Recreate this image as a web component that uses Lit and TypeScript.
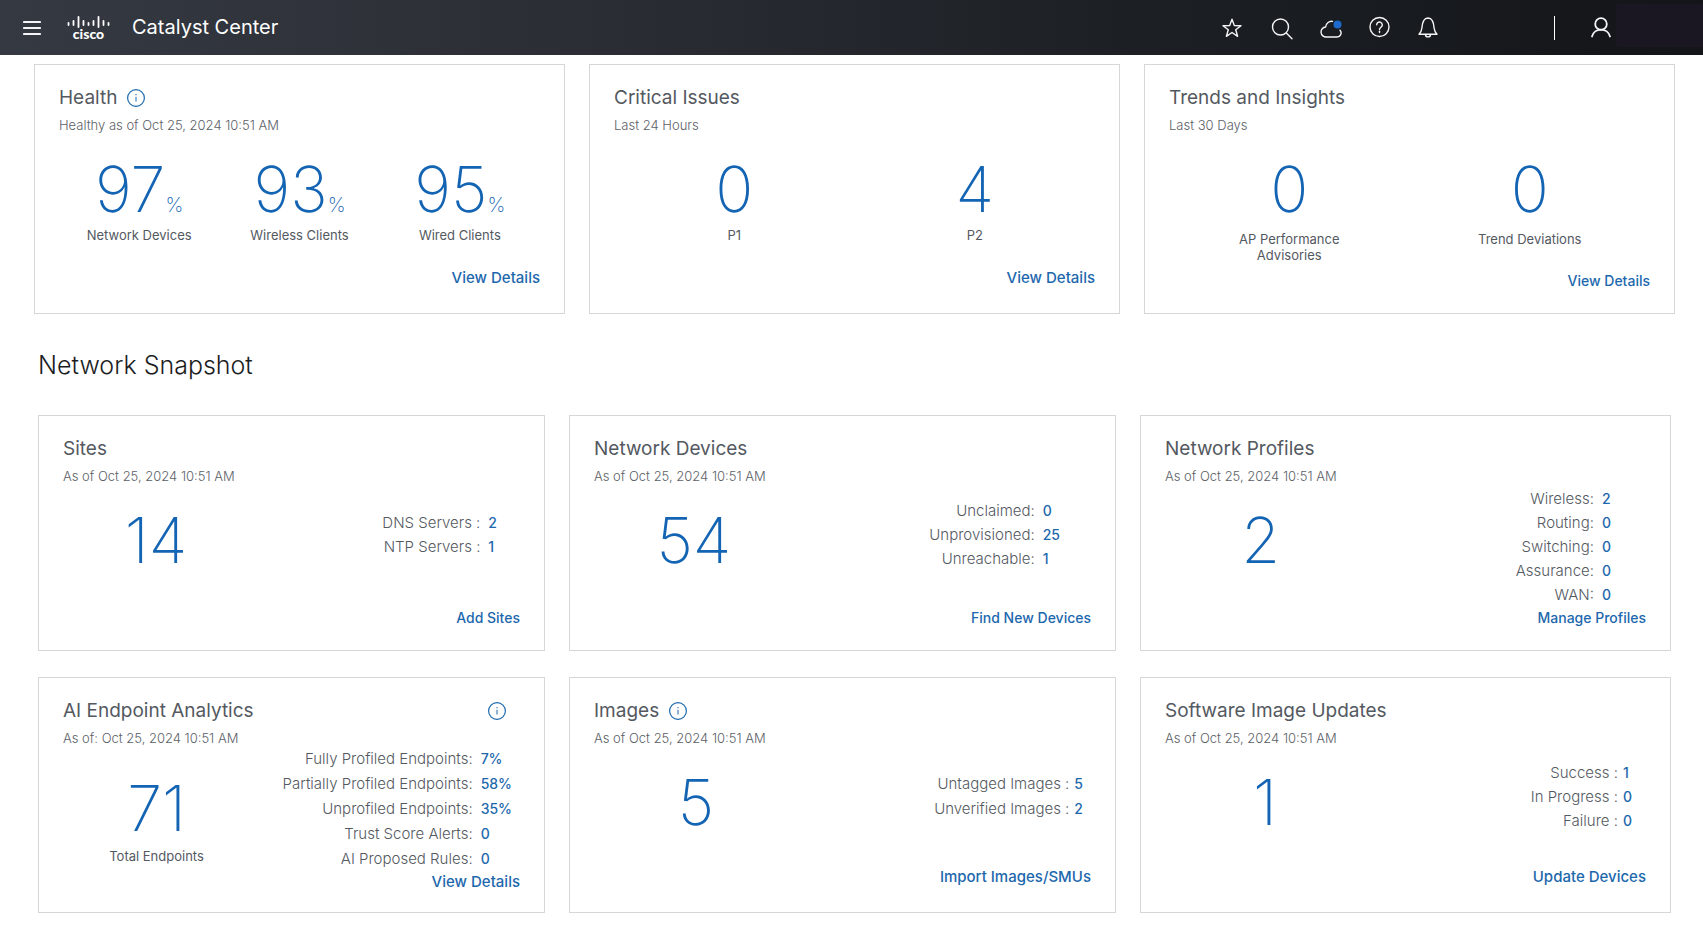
import { LitElement, html, css, svg, nothing } from "lit";
import { customElement, property } from "lit/decorators.js";

interface Metric {
  value: string;
  label?: string;
  unit?: string;
}

interface Stat {
  label: string;
  value: string;
}

interface CardData {
  id: string;
  title: string;
  subtitle: string;
  metrics: Metric[];
  stats?: Stat[];
  action: string;
  info?: boolean;
}

const overview: CardData[] = [
  {
    id: "health",
    title: "Health",
    subtitle: "Healthy as of Oct 25, 2024 10:51 AM",
    info: true,
    metrics: [
      { value: "97", unit: "%", label: "Network Devices" },
      { value: "93", unit: "%", label: "Wireless Clients" },
      { value: "95", unit: "%", label: "Wired Clients" },
    ],
    action: "View Details",
  },
  {
    id: "issues",
    title: "Critical Issues",
    subtitle: "Last 24 Hours",
    metrics: [
      { value: "0", label: "P1" },
      { value: "4", label: "P2" },
    ],
    action: "View Details",
  },
  {
    id: "trends",
    title: "Trends and Insights",
    subtitle: "Last 30 Days",
    metrics: [
      { value: "0", label: "AP Performance Advisories" },
      { value: "0", label: "Trend Deviations" },
    ],
    action: "View Details",
  },
];

const snapshot: CardData[] = [
  {
    id: "sites",
    title: "Sites",
    subtitle: "As of Oct 25, 2024 10:51 AM",
    metrics: [{ value: "14" }],
    stats: [
      { label: "DNS Servers :", value: "2" },
      { label: "NTP Servers :", value: "1" },
    ],
    action: "Add Sites",
  },
  {
    id: "devices",
    title: "Network Devices",
    subtitle: "As of Oct 25, 2024 10:51 AM",
    metrics: [{ value: "54" }],
    stats: [
      { label: "Unclaimed:", value: "0" },
      { label: "Unprovisioned:", value: "25" },
      { label: "Unreachable:", value: "1" },
    ],
    action: "Find New Devices",
  },
  {
    id: "profiles",
    title: "Network Profiles",
    subtitle: "As of Oct 25, 2024 10:51 AM",
    metrics: [{ value: "2" }],
    stats: [
      { label: "Wireless:", value: "2" },
      { label: "Routing:", value: "0" },
      { label: "Switching:", value: "0" },
      { label: "Assurance:", value: "0" },
      { label: "WAN:", value: "0" },
    ],
    action: "Manage Profiles",
  },
  {
    id: "endpoints",
    title: "AI Endpoint Analytics",
    subtitle: "As of: Oct 25, 2024 10:51 AM",
    info: true,
    metrics: [{ value: "71", label: "Total Endpoints" }],
    stats: [
      { label: "Fully Profiled Endpoints:", value: "7%" },
      { label: "Partially Profiled Endpoints:", value: "58%" },
      { label: "Unprofiled Endpoints:", value: "35%" },
      { label: "Trust Score Alerts:", value: "0" },
      { label: "AI Proposed Rules:", value: "0" },
    ],
    action: "View Details",
  },
  {
    id: "images",
    title: "Images",
    subtitle: "As of Oct 25, 2024 10:51 AM",
    info: true,
    metrics: [{ value: "5" }],
    stats: [
      { label: "Untagged Images :", value: "5" },
      { label: "Unverified Images :", value: "2" },
    ],
    action: "Import Images/SMUs",
  },
  {
    id: "updates",
    title: "Software Image Updates",
    subtitle: "As of Oct 25, 2024 10:51 AM",
    metrics: [{ value: "1" }],
    stats: [
      { label: "Success :", value: "1" },
      { label: "In Progress :", value: "0" },
      { label: "Failure :", value: "0" },
    ],
    action: "Update Devices",
  },
];

const icons = {
  star: svg`<path d="M12 3.200l2.300 6.300 6.700.2-5.300 4.100 1.900 6.500-5.600-3.800-5.600 3.800 1.900-6.500L3 9.700l6.700-.2z"/>`,
  search: svg`<circle cx="11.500" cy="11" r="8"/><path d="M17.300 17l5.700 5.700"/>`,
  cloud: svg`<path d="M14.500 5.400A6 6 0 0 0 7.600 11 5 5 0 0 0 8.500 21h10.500a4 4 0 0 0 3-6.700"/><circle class="dot" cx="19.500" cy="8.500" r="4"/>`,
  help: svg`<circle cx="12.500" cy="11" r="9.500"/><path d="M9.700 8.800a2.800 2.800 0 1 1 4.500 2.200c-1 .8-1.700 1.200-1.700 2.600"/><path d="M12.500 15.200v1.400"/>`,
  bell: svg`<path d="M3 18.200c1.600-1.600 2.600-3 2.900-6.200.2-3.400.4-5.200 1.900-7.500A5 5 0 0 1 12 2a5 5 0 0 1 4.200 2.500c1.500 2.300 1.700 4.100 1.900 7.500.3 3.200 1.300 4.600 2.900 6.200z"/><path d="M9.500 18.400a2.500 2.500 0 0 0 5 0"/>`,
  user: svg`<circle cx="12" cy="8" r="5.800"/><path d="M3 20.500a9.300 9.300 0 0 1 18 0"/>`,
};

@customElement("summary-card")
export class SummaryCard extends LitElement {
  @property({ attribute: false }) data!: CardData;

  static styles = css`
    :host {
      display: flex;
      min-width: 0;
    }
    .card {
      flex: 1;
      min-width: 0;
      box-sizing: border-box;
      display: flex;
      flex-direction: column;
      padding: 21px 24px 22px;
      border: 1px solid #d4d6d8;
      background: #fff;
    }
    .head {
      display: flex;
      align-items: center;
      gap: 10px;
    }
    h2 {
      margin: 0;
      font-size: 19px;
      line-height: 24px;
      font-weight: 400;
      color: #54595f;
    }
    .info {
      display: flex;
      padding: 0;
      border: 0;
      background: none;
      color: #1b69ad;
    }
    .subtitle {
      margin: 7px 0 0;
      font-size: 13px;
      line-height: 16px;
      font-weight: 300;
      color: #5c6167;
    }
    .body {
      display: flex;
      min-height: 96px;
      margin-top: 3px;
    }
    .metrics {
      flex: 1;
      display: flex;
      padding-top: 21px;
    }
    .with-stats .metrics {
      flex: 6 1 0;
    }
    .metric {
      flex: 1 1 0;
      display: flex;
      flex-direction: column;
      align-items: center;
      gap: 6px;
    }
    .number {
      font-size: 63px;
      line-height: 64px;
      font-weight: 150;
      color: #1464b4;
    }
    .unit {
      font-size: 20px;
      line-height: 20px;
      font-weight: 200;
    }
    .label {
      max-width: 128px;
      text-align: center;
      font-size: 13px;
      line-height: 16px;
      color: #54595f;
    }
    .stats {
      flex: 8 1 0;
      display: grid;
      grid-template-columns: 1fr auto;
      grid-auto-rows: 24px;
      align-content: center;
      column-gap: 8px;
      margin: 0;
      font-size: 15px;
      line-height: 24px;
      white-space: nowrap;
    }
    dt {
      text-align: right;
      font-weight: 300;
      color: #54595f;
    }
    dd {
      margin: 0;
      font-size: 14px;
      font-weight: 500;
      color: #1d68ad;
    }
    .action {
      align-self: flex-end;
      margin-top: auto;
      font-size: 14px;
      line-height: 20px;
      font-weight: 500;
      color: #1d68ad;
      text-decoration: none;
    }
    .health,
    .issues,
    .images,
    .updates {
      padding-bottom: 25px;
    }
    .health .action,
    .issues .action,
    .endpoints .action,
    .images .action,
    .updates .action {
      font-size: 15px;
    }
    .trends .metric {
      gap: 10px;
    }
    .sites .stats {
      padding-right: 23px;
    }
    .devices .stats {
      padding-right: 31px;
    }
    .profiles .stats {
      padding-right: 35px;
    }
    .endpoints .stats,
    .images .stats {
      padding-right: 8px;
    }
    .updates .stats {
      padding-right: 14px;
    }
    .images .stats,
    .updates .stats {
      column-gap: 5px;
    }
    .endpoints .metrics,
    .images .metrics {
      flex-grow: 5;
    }
    .endpoints .stats,
    .images .stats {
      flex-grow: 7;
      grid-auto-rows: 25px;
    }
    .endpoints.card {
      padding-bottom: 20px;
    }
    .endpoints .body {
      margin-top: 1px;
    }
    .endpoints .metrics {
      padding-top: 29px;
    }
    .endpoints .metric {
      gap: 8px;
    }
    .endpoints .info {
      margin: 0 14px 0 auto;
    }
  `;

  render() {
    const d = this.data;
    return html`
      <article class="card ${d.id} ${d.stats ? "with-stats" : ""}">
        <div class="head">
          <h2>${d.title}</h2>
          ${d.info
            ? html`<button class="info" type="button" aria-label="About ${d.title}">
                <svg width="18" height="18" viewBox="0 0 18 18" fill="none" stroke="currentColor">
                  <circle cx="9" cy="9" r="8.400" stroke-width="1.200" />
                  <path d="M9 7.800v4.700M9 5v1.300" />
                </svg>
              </button>`
            : nothing}
        </div>
        <p class="subtitle">${d.subtitle}</p>
        <div class="body">
          <div class="metrics">
            ${d.metrics.map(
              (m) => html`<div class="metric">
                <div class="number">
                  ${m.value}${m.unit ? html`<span class="unit">${m.unit}</span>` : nothing}
                </div>
                ${m.label ? html`<div class="label">${m.label}</div>` : nothing}
              </div>`
            )}
          </div>
          ${d.stats
            ? html`<dl class="stats">
                ${d.stats.map((s) => html`<dt>${s.label}</dt><dd>${s.value}</dd>`)}
              </dl>`
            : nothing}
        </div>
        <a class="action" href="#${d.id}">${d.action}</a>
      </article>
    `;
  }
}

@customElement("top-bar")
export class TopBar extends LitElement {
  static styles = css`
    :host {
      display: block;
    }
    .bar {
      display: flex;
      align-items: center;
      height: 55px;
      background: linear-gradient(90deg, #353942 0%, #2b2e34 33%, #1c2025 67%, #131518 100%);
      color: #fff;
    }
    button {
      display: flex;
      align-items: center;
      justify-content: center;
      width: 24px;
      height: 24px;
      padding: 0;
      border: 0;
      background: none;
      color: #f4f5f6;
    }
    .menu {
      margin-left: 20px;
    }
    .logo {
      margin-left: 22px;
    }
    .product {
      margin: 0 0 2px 21px;
      font-size: 20px;
      line-height: 24px;
      font-weight: 400;
    }
    .tools {
      display: flex;
      gap: 25px;
      margin-left: auto;
    }
    .divider {
      width: 1px;
      height: 24px;
      margin: 0 34px 0 114px;
      background: #fff;
    }
    .account {
      width: 87px;
      height: 43px;
      margin: 0 0 4px 3px;
      background: #1a1723;
    }
    .dot {
      fill: #1d69cc;
      stroke: none;
    }
    .wordmark {
      font: 900 14px Lato, sans-serif;
      fill: #fff;
    }
  `;

  private tool(label: string, glyph: unknown, width = 1.4) {
    return html`<button type="button" aria-label=${label}>
      <svg width="24" height="24" viewBox="0 0 24 24" fill="none" stroke="currentColor"
        stroke-width=${width} stroke-linecap="round" stroke-linejoin="round">${glyph}</svg>
    </button>`;
  }

  render() {
    const bars = [
      [2, 23, 25], [7, 21, 25], [12, 17, 27], [17, 21, 25], [22, 23, 25],
      [27, 21, 25], [32, 17, 27], [37, 21, 25], [42, 23, 25],
    ];
    return html`
      <header class="bar">
        <button class="menu" type="button" aria-label="Menu">
          <svg width="18" height="16" viewBox="0 0 18 16" stroke="currentColor" stroke-width="2.200" stroke-linecap="round">
            <path d="M1 2h16M1 8h16M1 14h16" />
          </svg>
        </button>
        <svg class="logo" width="45" height="28" viewBox="0 14 45 28" role="img" aria-label="Cisco">
          <g stroke="#fff" stroke-width="1.800" stroke-linecap="round">
            ${bars.map(([x, a, b]) => svg`<path d="M${x + 0.5} ${a}V${b}"/>`)}
          </g>
          <text class="wordmark" x="22.500" y="38.500" text-anchor="middle">cisco</text>
        </svg>
        <h1 class="product">Catalyst Center</h1>
        <div class="tools">
          ${this.tool("Favorites", icons.star)}
          ${this.tool("Search", icons.search)}
          ${this.tool("Cloud status", icons.cloud)}
          ${this.tool("Help", icons.help)}
          ${this.tool("Notifications", icons.bell)}
        </div>
        <div class="divider"></div>
        ${this.tool("Account", icons.user, 1.8)}
        <div class="account"></div>
      </header>
    `;
  }
}

@customElement("app-root")
export class AppRoot extends LitElement {
  static styles = css`
    :host {
      display: block;
      min-height: 100vh;
      background: #fff;
      font-family: Inter, "Liberation Sans", sans-serif;
    }
    .overview {
      display: grid;
      grid-template-columns: repeat(3, minmax(0, 1fr));
      grid-auto-rows: minmax(250px, auto);
      gap: 24px;
      padding: 9px 28px 0 34px;
    }
    .section-title {
      margin: 35px 38px 0;
      font-size: 25px;
      line-height: 32px;
      font-weight: 300;
      color: #1c1d1f;
    }
    .snapshot {
      display: grid;
      grid-template-columns: minmax(0, 507fr) minmax(0, 547fr) minmax(0, 531fr);
      grid-auto-rows: minmax(236px, auto);
      gap: 26px 24px;
      padding: 34px 32px 12px 38px;
    }
  `;

  render() {
    return html`
      <top-bar></top-bar>
      <main>
        <section class="overview">
          ${overview.map((c) => html`<summary-card .data=${c}></summary-card>`)}
        </section>
        <h2 class="section-title">Network Snapshot</h2>
        <section class="snapshot">
          ${snapshot.map((c) => html`<summary-card .data=${c}></summary-card>`)}
        </section>
      </main>
    `;
  }
}
